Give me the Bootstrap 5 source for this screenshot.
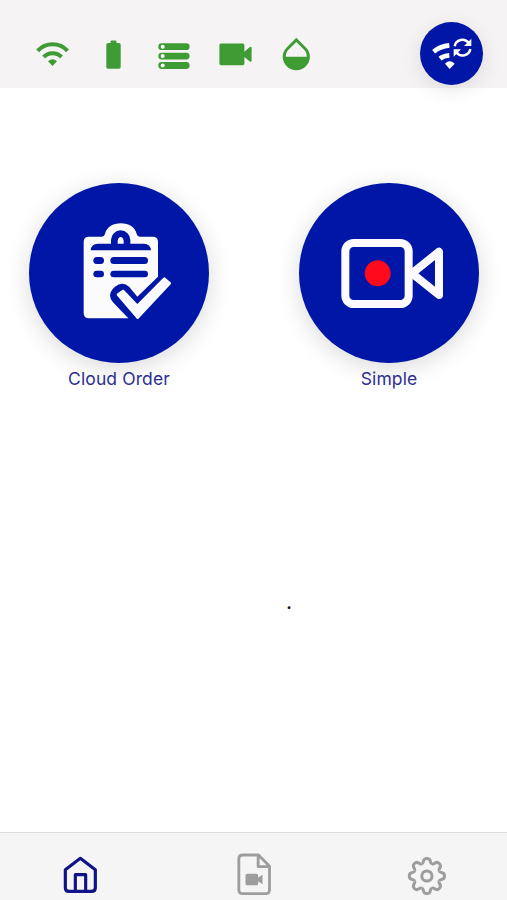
<!DOCTYPE html>
<html lang="en">
<head>
<meta charset="utf-8">
<meta name="viewport" content="width=device-width, initial-scale=1">
<title>Home</title>
<link href="https://cdn.jsdelivr.net/npm/bootstrap@5.3.0/dist/css/bootstrap.min.css" rel="stylesheet">
<style>
  body { font-family: Inter, "Liberation Sans", sans-serif; background: #fff; }
  svg { display: block; }
  .status-bar { height: 88px; background: #f5f3f4; padding: 20px 24px 0 34px; }
  .status-icons { gap: 25px; padding-top: 16px; color: #3f9c35; }
  .round-btn { background: #0016a6; color: #fff; box-shadow: 0 5px 24px rgba(0,0,0,.15); }
  .sync-btn { width: 63px; height: 63px; margin-top: 2px; box-shadow: 0 5px 20px rgba(0,0,0,.1); }
  .tiles { padding: 95px 28px 0 29px; }
  .tile-btn { width: 180px; height: 180px; }
  .tile-label { font-size: 17.5px; line-height: 24px; margin-top: 4px; color: #2b2f91; letter-spacing: .1px; }
  .dot-line { padding: 199px 0 0 71px; font-size: 21px; line-height: 24px; color: #111; }
  .tab-bar { height: 68px; background: #f5f5f5; border-top: 1px solid #dcdcdd; padding: 15px 60px 0; color: #9d9d9d; }
  .tab-bar .active { color: #101487; }
</style>
</head>
<body>
<div class="vh-100 d-flex flex-column overflow-hidden">
  <header class="status-bar d-flex justify-content-between align-items-start flex-shrink-0">
    <div class="status-icons d-flex">
      <svg width="36" height="36" viewBox="34 36 36 36" fill="none" stroke="currentColor" stroke-width="4.1">
        <path d="M37.7 50.9A20 20 0 0 1 67.5 50.9M43.7 57A12.4 12.4 0 0 1 61.5 57"/>
        <path d="M48 61.2Q52.5 57.2 57 61.2L52.5 66Z" fill="currentColor" stroke="none"/>
      </svg>
      <svg width="36" height="36" viewBox="95 36 36 36" fill="currentColor">
        <path d="M110.5 43V41.6Q110.5 40.5 111.8 40.5H115.2Q116.5 40.5 116.5 41.6V43H118.9Q120.7 43 120.7 44.8V67Q120.7 68.8 118.9 68.8H108.1Q106.3 68.8 106.3 67V44.8Q106.3 43 108.1 43Z"/>
      </svg>
      <svg width="36" height="36" viewBox="156 36 36 36" fill="currentColor">
        <rect x="158.3" y="43.3" width="31.3" height="6.8" rx="3.4"/><rect x="158.3" y="52.7" width="31.3" height="6.8" rx="3.4"/><rect x="158.3" y="62.1" width="31.3" height="6.8" rx="3.4"/>
        <g fill="#fff"><circle cx="162.7" cy="46.7" r="2"/><circle cx="162.7" cy="56.1" r="2"/><circle cx="162.7" cy="65.5" r="2"/></g>
      </svg>
      <svg width="36" height="36" viewBox="217 36 36 36" fill="currentColor">
        <rect x="219.4" y="43.4" width="25" height="21.8" rx="1.6"/>
        <path d="M244 52L249.6 47.2Q251.6 46 251.6 48V60.6Q251.6 62.4 249.6 61.2L244 56.8Z"/>
      </svg>
      <svg width="36" height="36" viewBox="278 36 36 36" fill="currentColor">
        <path fill-rule="evenodd" d="M296.3 37.8L305.9 47.4C309 50.5 309.9 53.6 309.9 56.6A13.6 13.6 0 0 1 282.7 56.6C282.7 53.6 283.6 50.5 286.7 47.4ZM285.8 56.7H306.8C306.8 53.5 305.9 51.5 303.9 49.5L296.3 41.9L288.7 49.5C286.7 51.5 285.8 53.5 285.8 56.7Z"/>
      </svg>
    </div>
    <button class="round-btn sync-btn btn rounded-circle border-0 p-0" aria-label="Reconnect">
      <svg width="63" height="63" viewBox="60 36 189 189" fill="none" stroke="#fff">
        <path d="M101 125Q119 109 148 106M120 146Q131 137 148 136" stroke-width="14"/>
        <path d="M135 161Q149 147 164 161L149 177Z" fill="#fff" stroke="none"/>
        <path d="M164 109A23.5 23.5 0 0 1 206 99M211 117A23.5 23.5 0 0 1 169 127" stroke-width="7.5"/>
        <path d="M214 86V108H192ZM161 140V118H183Z" fill="#fff" stroke="none"/>
      </svg>
    </button>
  </header>

  <main class="flex-grow-1">
    <div class="tiles d-flex justify-content-between">
      <div class="text-center">
        <button class="round-btn tile-btn btn rounded-circle border-0 p-0" aria-label="Cloud Order">
          <svg width="180" height="180" viewBox="-108 -81 540 540">
            <path fill="#fbfafc" d="M72 80H110Q118 80 120 72C124 52 144 40 167.500 40C191 40 211 52 215 72Q217 80 225 80H263Q279 80 279 96V200L217 260L193 231Q172 212 149 231Q124 254 144 277L190 325H72Q56 325 56 309V96Q56 80 72 80Z"/>
            <g fill="#0016a6">
              <path fill-rule="evenodd" d="M77 121Q79 101 98 101H138V90A29 29 0 0 1 196 90V101H237Q256 101 258 121ZM158 101H176V92Q174 81 167 81Q160 81 158 92Z"/>
              <rect x="85" y="141" width="32" height="21" rx="10.5"/><rect x="136" y="141" width="113" height="21" rx="10.5"/>
              <rect x="85" y="182" width="32" height="20" rx="10"/><rect x="136" y="182" width="113" height="20" rx="10"/>
            </g>
            <path fill="#fbfafc" stroke="#fbfafc" stroke-width="8" stroke-linejoin="round" d="M159 254L174 243L217 288L298 206L314 220L218 323Z"/>
          </svg>
        </button>
        <div class="tile-label">Cloud Order</div>
      </div>
      <div class="text-center">
        <button class="round-btn tile-btn btn rounded-circle border-0 p-0" aria-label="Simple">
          <svg width="180" height="180" viewBox="-78 -111 540 540" fill="none" stroke="#fdfbff" stroke-width="24" stroke-linejoin="round">
            <rect x="61" y="69" width="190" height="183" rx="25"/>
            <path d="M261 160L342 95V225Z"/>
            <circle cx="158" cy="160" r="39" fill="#ff0a1c" stroke="none"/>
          </svg>
        </button>
        <div class="tile-label">Simple</div>
      </div>
    </div>
    <div class="dot-line text-center">.</div>
  </main>

  <nav class="tab-bar d-flex justify-content-between flex-shrink-0">
    <a class="active" href="#" aria-label="Home">
      <svg width="40" height="52" viewBox="180 84 120 156" fill="none" stroke="currentColor" stroke-width="9.500" stroke-linejoin="round">
        <path d="M241 115L286 149V203Q286 214 275 214H207Q196 214 196 203V149ZM226 213V164H257V213"/>
      </svg>
    </a>
    <a class="text-reset" href="#" aria-label="Recordings">
      <svg width="40" height="52" viewBox="190.5 84 120 156" fill="none" stroke="currentColor" stroke-width="8.500" stroke-linejoin="round">
        <path d="M217 105H264L297 139V209Q297 221 285 221H217Q205 221 205 209V117Q205 105 217 105ZM263 106V140H297"/>
        <path fill="currentColor" stroke="none" d="M230 161H258Q263 161 263 166V173L276 164V193L263 184V191Q263 196 258 196H230Q225 196 225 191V166Q225 161 230 161Z"/>
      </svg>
    </a>
    <a class="text-reset" href="#" aria-label="Settings">
      <svg width="40" height="52" viewBox="407 848 40 52" fill="none" stroke="currentColor" stroke-width="3">
        <defs><path id="tooth" d="M-5-12.2C-3.6-12.8-3.6-14.2-3.3-15.2C-2.6-18.4 2.6-18.4 3.3-15.2C3.6-14.2 3.6-12.8 5-12.2"/></defs>
        <g transform="translate(426.9 876)">
          <use href="#tooth"/><use href="#tooth" transform="rotate(45)"/><use href="#tooth" transform="rotate(90)"/><use href="#tooth" transform="rotate(135)"/>
          <use href="#tooth" transform="rotate(180)"/><use href="#tooth" transform="rotate(225)"/><use href="#tooth" transform="rotate(270)"/><use href="#tooth" transform="rotate(315)"/>
          <circle r="5.100"/>
        </g>
      </svg>
    </a>
  </nav>
</div>
<script src="https://cdn.jsdelivr.net/npm/bootstrap@5.3.0/dist/js/bootstrap.bundle.min.js"></script>
</body>
</html>
